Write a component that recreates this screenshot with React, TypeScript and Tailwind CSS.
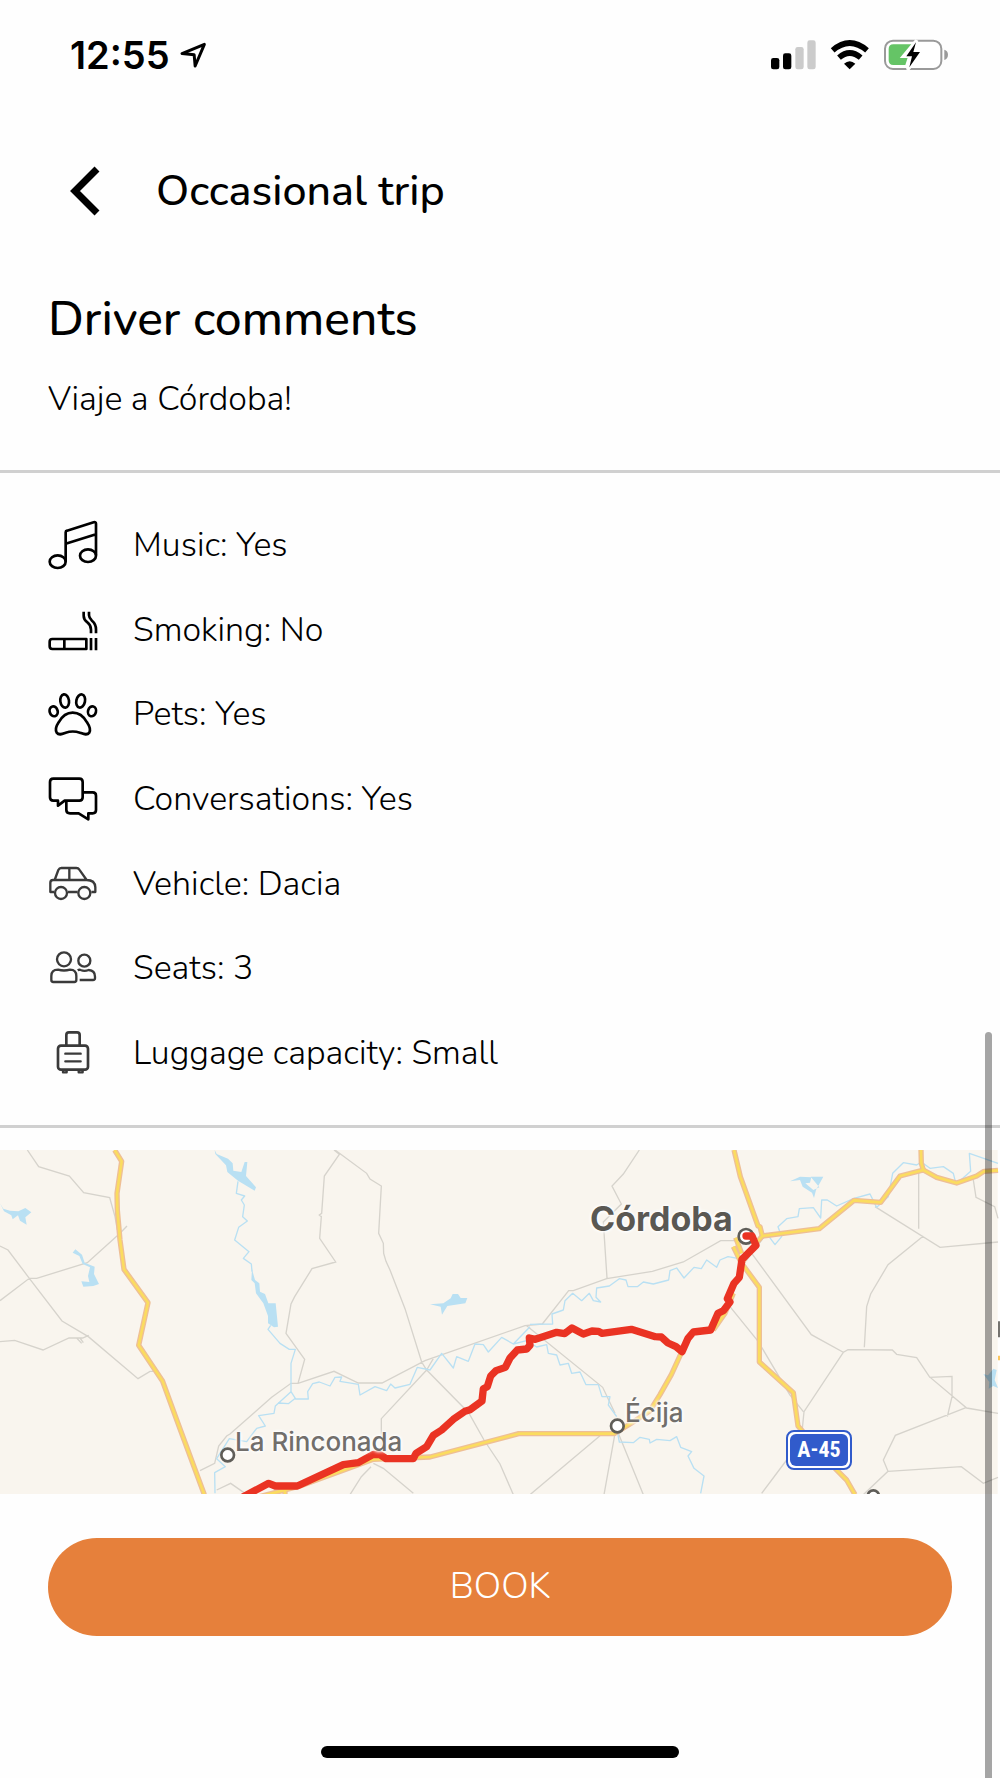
import type { ReactNode } from "react";

const preferences = [
  { label: "Music: Yes", icon: <MusicIcon /> },
  { label: "Smoking: No", icon: <SmokingIcon /> },
  { label: "Pets: Yes", icon: <PawIcon /> },
  { label: "Conversations: Yes", icon: <ChatIcon /> },
  { label: "Vehicle: Dacia", icon: <CarIcon /> },
  { label: "Seats: 3", icon: <SeatsIcon /> },
  { label: "Luggage capacity: Small", icon: <LuggageIcon /> },
];

export default function App() {
  return (
    <div className="relative min-h-screen overflow-hidden bg-[#fefefe] text-black font-['Nunito','Open_Sans',sans-serif]">
      <StatusBar />

      <header className="flex h-[162px] items-center gap-[52px] pl-[66px]">
        <button type="button" aria-label="Back" className="h-14 w-[38px]">
          <svg viewBox="0 0 38 56" className="h-full w-full" fill="none" stroke="currentColor">
            <path d="M31 6 L9 28 L31 50" strokeWidth="7" />
          </svg>
        </button>
        <h1 className="text-[43px] leading-[56px] font-medium">Occasional trip</h1>
      </header>

      <section className="border-b-[3px] border-[#d0d0d0] px-12 pt-[19px] pb-[47px]">
        <h2 className="text-[48px] leading-[56px] font-medium">Driver comments</h2>
        <p className="mt-7 text-[34px] leading-[48px] font-light">Viaje a Córdoba!</p>
      </section>

      <section className="border-b-[3px] border-[#d0d0d0] px-12 py-[30px]">
        <ul className="grid min-h-[592px] auto-rows-fr">
          {preferences.map((item) => (
            <li key={item.label} className="flex items-center gap-[35px]">
              {item.icon}
              <span className="text-[34px] leading-[48px] font-light">{item.label}</span>
            </li>
          ))}
        </ul>
      </section>

      <RouteMap />

      <div className="px-12 pt-11">
        <button
          type="button"
          className="h-[98px] w-full rounded-full bg-[#e6803b] text-[36px] leading-[48px] font-light text-white"
        >
          BOOK
        </button>
      </div>

      {/* Home indicator */}
      <div className="mx-auto mt-[110px] mb-5 h-3 w-[358px] rounded-full bg-black" />

      {/* Scroll thumb */}
      <div className="absolute top-[1032px] right-2 bottom-0 w-[7px] rounded-t-full bg-black/35" />
    </div>
  );
}

function StatusBar() {
  return (
    <div className="flex h-[110px] items-center justify-between pr-[50px] pl-[70px]">
      <div className="flex items-center gap-2.5">
        <span className="font-['Inter',sans-serif] text-[38px] leading-[48px] font-semibold">12:55</span>
        <svg viewBox="540 124 82 82" className="h-[27px] w-[27px]" fill="none" stroke="currentColor">
          <path d="M614 131 L546 159 L583 163 L586 197 Z" strokeWidth="9" strokeLinejoin="round" />
        </svg>
      </div>
      <svg viewBox="90 53 540 105" className="h-[35px] w-[180px]">
        <rect x="93" y="113" width="25" height="34" rx="7" />
        <rect x="129" y="99" width="25" height="48" rx="7" />
        <rect x="166" y="80" width="25" height="67" rx="7" fill="#cbcbcb" />
        <rect x="202" y="60" width="25" height="87" rx="7" fill="#cbcbcb" />
        {/* wifi */}
        <g fill="none" stroke="black" strokeWidth="17">
          <path d="M278 90 Q329 46 381 90" />
          <path d="M297 112 Q329 84 362 112" />
        </g>
        <path d="M312 130 Q329 115 346 130 L329 147 Z" />
        {/* battery */}
        <rect x="435" y="61" width="169" height="85" rx="24" fill="white" stroke="#9a9a9a" strokeWidth="6" />
        <path d="M613 88 Q624 91 624 103 Q624 115 613 119 Z" fill="#9a9a9a" />
        <path d="M460 72 H516 L485 112 H503 L496 134 H460 Q446 134 446 120 V86 Q446 72 460 72 Z" fill="#65c466" />
        <path d="M530 60 L490 108 H512 L503 148 L545 95 H522 Z" fill="white" stroke="white" strokeWidth="10" />
        <path d="M528 66 L499 108 H516 L508 141 L540 95 H520 Z" />
      </svg>
    </div>
  );
}

function RowIcon({ viewBox, color = "black", children }: { viewBox: string; color?: string; children: ReactNode }) {
  return (
    <svg
      viewBox={viewBox}
      className="h-[50px] w-[50px] shrink-0"
      fill="none"
      stroke={color}
      strokeWidth="8"
      strokeLinejoin="round"
    >
      {children}
    </svg>
  );
}

function MusicIcon() {
  return (
    <RowIcon viewBox="53 60 150 150">
      <path d="M106 185 V97 Q106 93 110 92 L190 67 Q197 65 197 71 V166 M106 131 L197 103" />
      <ellipse cx="82" cy="185" rx="24" ry="19" />
      <ellipse cx="173" cy="167" rx="24" ry="19" />
    </RowIcon>
  );
}

function SmokingIcon() {
  return (
    <RowIcon viewBox="53 311 150 150">
      <path d="M66 413 H168 V443 H66 Q58 443 58 435 V421 Q58 413 66 413 Z M102 413 V443" />
      <path d="M182 410 V447 M197 410 V447" />
      <path d="M160 331 V343 Q160 355 171 363 Q182 372 182 385 V396 M176 331 V342 Q176 350 185 358 Q197 368 197 384 V396" />
    </RowIcon>
  );
}

function PawIcon() {
  return (
    <RowIcon viewBox="53 566 150 150">
      <ellipse cx="70" cy="633" rx="12" ry="15" transform="rotate(-15 70 633)" />
      <ellipse cx="103" cy="602" rx="13" ry="20" transform="rotate(-8 103 602)" />
      <ellipse cx="151" cy="602" rx="13" ry="20" transform="rotate(12 151 602)" />
      <ellipse cx="185" cy="633" rx="12" ry="15" transform="rotate(15 185 633)" />
      <path d="M127 637 C108 637 94 650 85 666 C77 678 74 688 79 697 C86 706 96 701 106 697 Q127 690 149 697 C160 701 170 706 177 697 C182 688 178 678 170 666 C161 650 147 637 127 637 Z" />
    </RowIcon>
  );
}

function ChatIcon() {
  return (
    <RowIcon viewBox="53 41 150 150">
      <path d="M69 55 H147 Q157 55 157 65 V111 Q157 121 147 121 H103 L83 136 V121 H69 Q59 121 59 111 V65 Q59 55 69 55 Z" />
      <path d="M157 96 H187 Q197 96 197 106 V149 Q197 159 187 159 H174 V177 L145 159 H119 Q108 159 108 149 V121" />
    </RowIcon>
  );
}

function CarIcon() {
  return (
    <RowIcon viewBox="53 295 150 150" color="#3a3a3a">
      <g strokeWidth="7">
        <path d="M72 394 H60 V366 Q60 358 68 358 H73 L84 328 Q87 322 93 322 H138 Q144 322 147 327 L169 358 Q194 358 195 380 V394 H183 M113 394 H142 M73 358 H169 M117 322 V358" />
        <circle cx="92" cy="397" r="18" />
        <circle cx="162" cy="397" r="18" />
      </g>
    </RowIcon>
  );
}

function SeatsIcon() {
  return (
    <RowIcon viewBox="53 549 150 150" color="#3a3a3a">
      <g strokeWidth="7">
        <circle cx="101" cy="598" r="21" />
        <circle cx="162" cy="602" r="18" />
        <path d="M63 660 V648 Q63 629 83 629 Q101 634 119 629 Q138 629 138 648 V660 Q138 666 132 666 H69 Q63 666 63 660 Z" />
        <path d="M142 631 Q147 628 151 630 Q162 635 175 630 Q194 631 194 650 V655 Q194 660 188 660 H148" />
      </g>
    </RowIcon>
  );
}

function LuggageIcon() {
  return (
    <RowIcon viewBox="53 802 150 150" color="#3a3a3a">
      <path d="M108 854 V823 Q108 815 116 815 H140 Q148 815 148 823 V854" />
      <rect x="83" y="855" width="90" height="72" rx="9" />
      <path d="M105 879 H151 M105 902 H151" strokeLinecap="round" strokeWidth="7" />
      <path d="M98 931 V935 H109 V931 M145 931 V935 H157 V931" strokeWidth="7" />
    </RowIcon>
  );
}

// Motorways get a pink casing under the yellow line.
const motorways = [
  "M344 0 L365 34 L351 130 L352 180 L360 270 L372 358 L444 458 L416 586 L488 694 L534 820 L613 1034",
  "M740 1050 L900 1008 L1120 928 L1290 921 L1556 851 H1842 L1896 818 L1950 782 L1980 734 L2014 674 L2046 604",
  "M2202 0 L2221 80 L2274 228 L2280 230 L2287 258 L2458 236 L2562 151 L2642 157 L2700 78 L2770 60 L2810 82 L2870 99 L2930 78 L2952 64 L2994 61",
  "M2763 0 L2764 40 L2770 60",
  "M2287 258 L2260 290 L2225 340 L2278 412 V636 L2380 728 L2394 828 L2500 950 L2540 990 L2565 1034",
  "M2207 263 L2225 310 M2200 290 L2222 335",
  "M2200 430 L2175 490 L2140 540",
  "M855 1034 V1010",
];

const roads =
  "M82 0 L116 50 L208 78 L251 128 L329 143 L345 200 L352 240 M381 228 L360 250 L262 338 L110 385 L88 385 L0 452 " +
  "M0 288 L24 300 L88 385 L186 513 L265 560 L414 686 L450 664 L460 664 M0 575 L44 571 L129 600 L207 564 L248 564 L266 556 M230 564 L245 580 M240 564 L250 578 " +
  "M1002 0 L1018 13 L973 78 L965 190 L958 195 L964 200 L959 265 L1007 336 L936 356 L884 440 L873 462 L858 550 L914 628 L894 700 L873 700 L815 742 L690 852 L680 858 L656 888 L644 940 L600 962 M894 700 L1002 664 L1075 699 H1146 L1275 632 L1575 527 L1627 522 L1706 422 L1720 422 L1820 386 L1957 364 L2050 336 L2162 272 L2210 272 " +
  "M1005 0 L1100 70 L1110 87 L1144 108 L1136 250 L1150 280 L1151 310 L1158 334 L1170 360 L1215 476 L1265 636 L1280 660 L1406 788 L1452 870 L1500 942 L1540 1034 M1280 660 L1144 806 V890 M1302 622 L1280 660 M1120 940 L1150 955 L1240 1030 M1113 950 L1084 980 L1050 1034 " +
  "M1918 0 L1870 72 L1836 108 L1864 162 L1810 216 L1821 384 M1580 527 L1808 712 L1845 790 M1800 857 L1590 1034 M1845 850 L1812 1034 M1855 850 L1930 1034 " +
  "M2255 310 L2434 554 L2530 607 L2544 599 L2677 600 L2690 613 L2750 623 L2788 680 L2900 774 L2994 790 M2530 607 L2412 785 L2407 836 M2190 470 L2275 575 L2370 735 L2410 785 " +
  "M2625 170 L2820 292 L2994 276 M2756 60 V236 M2770 258 L2664 344 L2612 432 L2600 470 L2593 592 M2920 90 L2928 142 L2984 170 L2994 205 M2788 682 L2856 679 V740 L2842 800 M2898 773 L2686 856 L2650 930 L2664 964 L2590 1034 M2664 964 L2884 950 L2950 1000 L2994 982 M2360 930 L2285 1030 M650 1020 L692 1000 L735 1030";

const rivers =
  "M714 94 L709 130 L734 138 L724 150 L733 165 L728 200 L742 213 L716 232 L704 270 L747 305 L730 325 L754 342 L756 365 M812 526 L804 538 L840 580 L868 598 L886 598 L873 640 V725 L826 768 L822 790 L776 797 L796 828 L770 835 L740 875 L688 866 L650 926 L676 950 L644 968 L645 1030 " +
  "M873 725 L886 745 L865 761 L835 759 M886 747 H925 L923 725 L938 701 L958 696 L990 708 L1005 682 L1025 681 L1020 694 L1075 703 L1080 735 L1125 710 L1160 722 L1172 702 L1185 714 L1230 703 L1252 652 L1290 660 L1325 610 L1360 654 L1370 620 L1405 634 L1425 582 L1450 584 L1465 606 L1505 562 L1540 582 L1590 530 " +
  "M1540 582 L1580 572 L1610 591 L1640 584 L1645 610 L1670 615 L1680 645 L1705 640 L1715 670 L1740 666 L1758 704 L1795 704 L1806 740 L1830 740 L1825 765 L1850 800 M1853 850 L1858 876 L1900 878 L1920 862 L1948 868 L1950 879 L1970 868 L2010 872 L2030 860 L2042 892 L2075 905 L2064 918 L2082 955 L2112 978 L2102 1030 " +
  "M1590 523 L1658 522 L1656 492 L1690 480 L1695 452 L1718 430 L1745 452 L1768 430 L1780 452 L1802 456 L1788 442 L1790 414 L1828 408 L1858 386 L1878 390 L1884 410 L1912 410 L1930 396 L1960 402 L2006 390 L2010 362 L2030 354 L2052 384 L2082 352 L2104 356 L2120 330 L2150 352 L2160 330 L2184 320 L2240 330 L2300 250 L2325 284 L2345 260 L2334 230 L2360 206 L2394 200 L2398 176 L2440 173 L2462 204 L2465 150 L2482 150 L2510 168 L2562 145 L2610 132 L2630 172 L2665 140 L2678 70 L2710 38 L2750 45 L2764 36 L2790 55 L2830 50 L2860 70 L2866 94 L2880 92 L2912 64 L2908 10 L2994 40";

const lakes = [
  "M644 0 L650 12 L684 26 L698 40 L700 62 L724 66 L734 36 L742 36 L738 78 L768 112 L764 122 L714 92 L682 66 L678 46 L646 12 Z",
  "M756 358 L765 390 L778 400 L780 425 L795 432 L805 460 L827 460 L834 530 L822 532 L804 520 L804 498 L790 460 L768 430 L764 400 L754 390 Z",
  "M0 160 L10 176 L30 182 L55 184 L76 174 L94 187 L76 202 L80 224 L60 212 L54 196 L38 208 L34 196 L12 184 Z",
  "M218 308 L226 298 L246 314 L254 338 L284 350 L282 372 L297 402 L280 408 L250 410 L244 394 L268 396 L264 378 L270 352 L248 342 L238 318 Z",
  "M1290 463 L1330 460 L1352 445 L1358 432 L1374 432 L1382 444 L1402 444 L1396 460 L1342 468 L1326 494 L1322 470 Z",
  "M2370 94 L2400 80 L2434 82 L2430 98 L2416 100 L2440 120 L2458 112 L2432 80 H2470 L2448 120 L2442 144 L2436 128 L2408 110 L2400 90 Z",
  "M2950 672 L2964 676 L2980 656 L2990 660 L2984 690 L2994 714 L2980 708 L2966 716 L2968 696 Z",
];

const route =
  "M730 1040 L806 1000 L826 1008 L892 1008 L1030 944 L1075 938 L1120 913 L1140 914 L1158 926 H1240 L1248 910 L1280 890 L1300 856 L1325 840 L1360 808 L1395 784 L1410 779 L1446 753 L1450 716 L1462 710 L1472 678 L1488 662 L1516 652 L1530 624 L1552 600 L1580 597 L1590 586 L1588 564 L1606 568 L1670 547 L1694 551 L1716 534 L1750 552 L1776 543 L1796 544 L1806 550 L1894 538 L1966 560 L1984 561 L2004 579 L2028 590 L2046 605 L2064 565 L2080 546 L2132 540 L2154 490 L2170 482 L2190 456 L2182 446 L2202 400 L2218 382 L2226 328 L2268 286 L2256 258 H2238";

function RouteMap() {
  return (
    <div className="relative mt-[22px] h-[344px] w-full overflow-hidden font-['Inter',sans-serif]">
      <svg viewBox="0 0 3000 1032" className="h-full w-full" preserveAspectRatio="xMidYMid slice" fill="none">
        <rect width="2993" height="1032" fill="#f9f5ee" />
        <path d={roads} stroke="#d6d3cc" strokeWidth="4" />
        <path d={rivers} stroke="#b9e0f3" strokeWidth="4" strokeLinejoin="round" />
        {lakes.map((d) => (
          <path key={d} d={d} fill="#b9e0f3" />
        ))}
        {motorways.map((d) => (
          <path key={d} d={d} stroke="#eebf96" strokeWidth="16" strokeLinejoin="round" />
        ))}
        {motorways.map((d) => (
          <path key={d} d={d} stroke="#fbdc5f" strokeWidth="8" strokeLinejoin="round" />
        ))}
        <g fill="white" stroke="#5f5d58" strokeWidth="8">
          <circle cx="683" cy="915" r="19" />
          <circle cx="1852" cy="828" r="19" />
          <circle cx="2238" cy="259" r="22" />
          <circle cx="2620" cy="1038" r="17" />
        </g>
        <path d={route} stroke="#ea3323" strokeWidth="22" strokeLinejoin="round" strokeLinecap="round" />
        <path d="M2994 624 H3000" stroke="#fbc65f" strokeWidth="14" />
        <path d="M2997 514 V562" stroke="#5a5853" strokeWidth="5" />
      </svg>
      <MapLabel className="top-[49px] left-[59%] text-[34px] leading-10 font-bold text-[#5a5853]">Córdoba</MapLabel>
      <MapLabel className="top-[276px] left-[23.5%] text-[26px] leading-8 font-medium text-[#716e6b]">La Rinconada</MapLabel>
      <MapLabel className="top-[247px] left-[62.5%] text-[26px] leading-8 font-medium text-[#716e6b]">Écija</MapLabel>
      <div className="absolute top-[280px] left-[78.6%] rounded-lg border-2 border-[#315bcb] bg-white p-0.5">
        <div className="flex h-8 w-[58px] items-center justify-center rounded-md bg-[#315bcb] font-['Roboto_Condensed','Roboto',sans-serif] text-[22px] leading-8 font-bold text-white">
          A-45
        </div>
      </div>
    </div>
  );
}

function MapLabel({ className, children }: { className: string; children: ReactNode }) {
  return (
    <span
      className={`absolute whitespace-nowrap [text-shadow:0_0_2px_white,0_0_3px_white,0_0_4px_white,0_0_4px_white] ${className}`}
    >
      {children}
    </span>
  );
}
